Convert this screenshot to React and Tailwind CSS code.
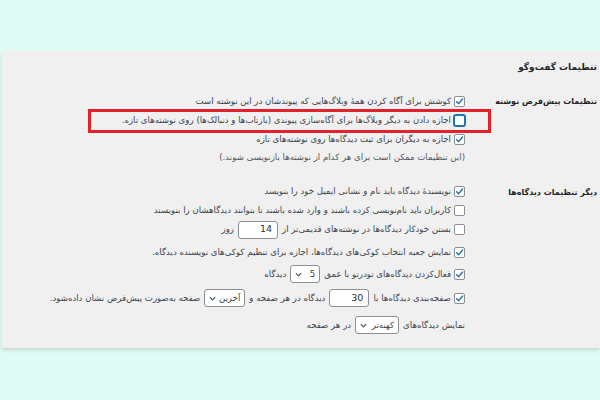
import React from 'react';

const Check = ({ checked, focus }) => (
  <span
    className={
      focus
        ? 'inline-flex shrink-0 items-center justify-center w-[11px] h-[11px] bg-white rounded-[2px] border border-[#2271b1] shadow-[0_0_0_1px_#2271b1]'
        : 'inline-flex shrink-0 items-center justify-center w-[11px] h-[11px] bg-white rounded-[2px] border border-[#8c8f94]'
    }
  >
    {checked && (
      <svg width="9" height="9" viewBox="0 0 10 10" fill="none">
        <path d="M1.8 5.2 L4.1 7.4 L8.4 2.2" stroke="#2271b1" strokeWidth="1.6" strokeLinecap="round" strokeLinejoin="round" />
      </svg>
    )}
  </span>
);

const Chevron = () => (
  <svg width="7" height="5" viewBox="0 0 8 5" fill="none">
    <path d="M1 1 L4 4 L7 1" stroke="#50575e" strokeWidth="1.4" />
  </svg>
);

const Select = ({ value, w }) => (
  <span className={`inline-flex items-center justify-between h-[18px] bg-white border border-[#8c8f94] rounded-[3px] pr-[4px] pl-[4px] ${w}`}>
    <span>{value}</span>
    <Chevron />
  </span>
);

const NumInput = ({ value }) => (
  <span className="inline-flex items-center justify-start h-[18px] w-[40px] bg-white border border-[#8c8f94] rounded-[3px] pr-[5px] text-[#2c3338] text-[9.5px]">
    {value}
  </span>
);

const Row = ({ checked, focus, className, children }) => (
  <div className={`flex items-center gap-[3px] ${className}`}>
    <Check checked={checked} focus={focus} />
    <span className="whitespace-nowrap">{children}</span>
  </div>
);

export default function App() {
  return (
    <div
      dir="rtl"
      className="w-[600px] h-[400px] bg-[#e1fcf5] overflow-hidden text-[8.6px] text-[#3c434a]"
      style={{ fontFamily: 'Tahoma, "DejaVu Sans", sans-serif' }}
    >
      <div className="mt-[51px] h-[297px] w-[598px] ml-auto bg-[#f0f0f0] shadow-[0_2px_4px_rgba(0,0,0,0.15)] pr-[3px] pt-[7px]">
        <h2 className="text-[9px] font-bold leading-[18px] text-[#1d2327]">تنظیمات گفت‌وگو</h2>

        {/* section 1 */}
        <div className="flex mt-[16px]">
          <div className="w-[130px] shrink-0 font-bold text-[8px] text-[#1d2327] leading-[19px]">تنظیمات پیش‌فرض نوشته</div>
          <div className="flex-1 flex flex-col pr-[2px]">
            <Row checked className="h-[19px]">کوشش برای آگاه کردن همهٔ وبلاگ‌هایی که پیوندشان در این نوشته است</Row>
            <div className="relative">
              <Row focus className="h-[19px]">
                اجازه دادن به دیگر وبلاگ‌ها برای آگاه‌سازی پیوندی (بازتاب‌ها و دنبالک‌ها) روی نوشته‌های تازه.
              </Row>
              <div className="absolute left-[86px] right-[-26px] top-[-2px] bottom-[-3px] border-[3px] border-[#e5202b]"></div>
            </div>
            <Row checked className="h-[19px]">اجازه به دیگران برای ثبت دیدگاه‌ها روی نوشته‌های تازه</Row>
            <div className="h-[17px] flex items-center text-[#50575e]">
              (این تنظیمات ممکن است برای هر کدام از نوشته‌ها بازنویسی شوند.)
            </div>
          </div>
        </div>

        {/* section 2 */}
        <div className="flex mt-[16px]">
          <div className="w-[130px] shrink-0 font-bold text-[8px] text-[#1d2327] leading-[21px]">دیگر تنظیمات دیدگاه‌ها</div>
          <div className="flex-1 flex flex-col pr-[2px]">
            <Row checked className="h-[19px]">نویسندهٔ دیدگاه باید نام و نشانی ایمیل خود را بنویسد</Row>
            <Row className="h-[18px]">کاربران باید نام‌نویسی کرده باشند و وارد شده باشند تا بتوانند دیدگاهشان را بنویسند</Row>
            <Row className="h-[21px]">
              <span className="inline-flex items-center gap-[4px]">
                بستن خودکار دیدگاه‌ها در نوشته‌های قدیمی‌تر از <NumInput value="14" /> روز
              </span>
            </Row>
            <Row checked className="h-[25px]">نمایش جعبه انتخاب کوکی‌های دیدگاه‌ها، اجازه برای تنظیم کوکی‌های نویسنده دیدگاه.</Row>
            <Row checked className="h-[18px]">
              <span className="inline-flex items-center gap-[4px]">
                فعال‌کردن دیدگاه‌های تودرتو با عمق <Select value="5" w="w-[30px]" /> دیدگاه
              </span>
            </Row>
            <Row checked className="h-[18px] mt-[6px]">
              <span className="inline-flex items-center gap-[4px]">
                صفحه‌بندی دیدگاه‌ها با <NumInput value="30" /> دیدگاه در هر صفحه و{' '}
                <Select value="آخرین" w="w-[41px]" /> صفحه به‌صورت پیش‌فرض نشان داده‌شود.
              </span>
            </Row>
            <div className="h-[18px] mt-[9px] flex items-center gap-[4px] whitespace-nowrap">
              نمایش دیدگاه‌های <Select value="کهنه‌تر" w="w-[44px]" /> در هر صفحه
            </div>
          </div>
        </div>
      </div>
    </div>
  );
}
